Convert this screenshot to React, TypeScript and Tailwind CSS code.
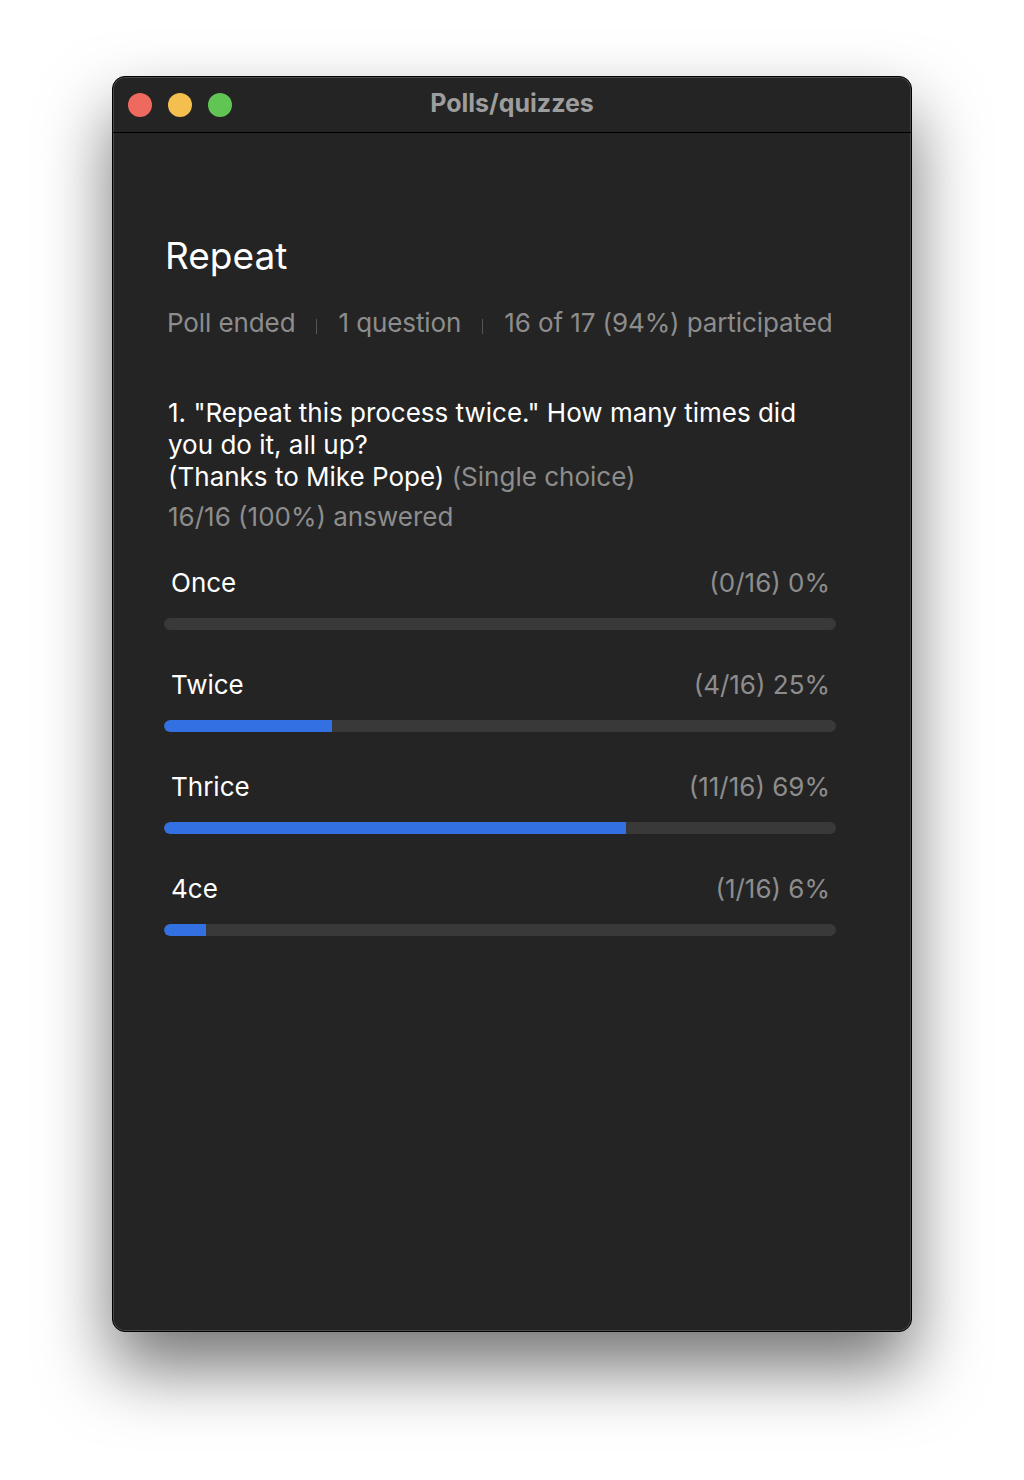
import React from 'react';

const options = [
  { label: 'Once', count: 0 },
  { label: 'Twice', count: 4 },
  { label: 'Thrice', count: 11 },
  { label: '4ce', count: 1 },
];

const total = 16;

function Separator() {
  return <span className="mx-[21px] inline-block h-[15px] w-px shrink-0 translate-y-[3px] bg-[#555555]" />;
}

export default function App() {
  return (
    <div
      className="min-h-[1480px] w-[1024px] bg-white pl-[112px] pt-[76px]"
      style={{ fontFamily: 'Inter, "Noto Sans", sans-serif' }}
    >
      <div className="flex h-[1256px] w-[800px] flex-col overflow-hidden rounded-[13px] border border-black bg-[#242424] shadow-[inset_0_0_0_1px_#4a4a4a,0_36px_70px_rgba(0,0,0,0.55)]">
        {/* title bar */}
        <div className="relative flex h-[56px] shrink-0 items-center border-b border-black px-[15px]">
          <div className="flex gap-[16px]">
            <span className="h-[24px] w-[24px] rounded-full bg-[#ee6a5f]" />
            <span className="h-[24px] w-[24px] rounded-full bg-[#f5bf4f]" />
            <span className="h-[24px] w-[24px] rounded-full bg-[#61c554]" />
          </div>
          <div className="absolute inset-x-0 top-0 flex h-[53px] items-center justify-center text-[25px] font-bold text-[#9d9d9d]">
            Polls/quizzes
          </div>
        </div>

        <div className="flex flex-col pl-[51px] pr-[75px] pt-[100px]">
          <h1 className="pl-[1px] text-[37px] leading-[46px] font-normal text-white">Repeat</h1>

          <div className="mt-[28px] flex items-center whitespace-nowrap pl-[3px] text-[26px] leading-[32px] tracking-[-0.1px] text-[#8d8d8d]">
            <span>Poll ended</span>
            <Separator />
            <span>1 question</span>
            <Separator />
            <span>16 of 17 (94%) participated</span>
          </div>

          <div className="mt-[58px] pl-[4px] text-[26px] leading-[32px] text-white">
            <p>1. "Repeat this process twice." How many times did you do it, all up?</p>
            <p>
              (Thanks to Mike Pope) <span className="text-[#8d8d8d]">(Single choice)</span>
            </p>
            <p className="mt-[8px] text-[#8d8d8d]">16/16 (100%) answered</p>
          </div>

          <div className="mt-[34px] flex flex-col">
            {options.map((o) => {
              const pct = Math.round((o.count / total) * 100);
              return (
                <div key={o.label} className="mb-[39px]">
                  <div className="flex justify-between pl-[7px] pr-[6px] text-[26px] leading-[32px]">
                    <span className="text-white">{o.label}</span>
                    <span className="text-[#8d8d8d]">
                      ({o.count}/{total}) {pct}%
                    </span>
                  </div>
                  <div className="mt-[19px] h-[12px] w-full overflow-hidden rounded-full bg-[#393939]">
                    <div
                      className="h-full rounded-l-full bg-[#3371e3]"
                      style={{ width: `${(o.count / total) * 100}%` }}
                    />
                  </div>
                </div>
              );
            })}
          </div>
        </div>
      </div>
    </div>
  );
}
